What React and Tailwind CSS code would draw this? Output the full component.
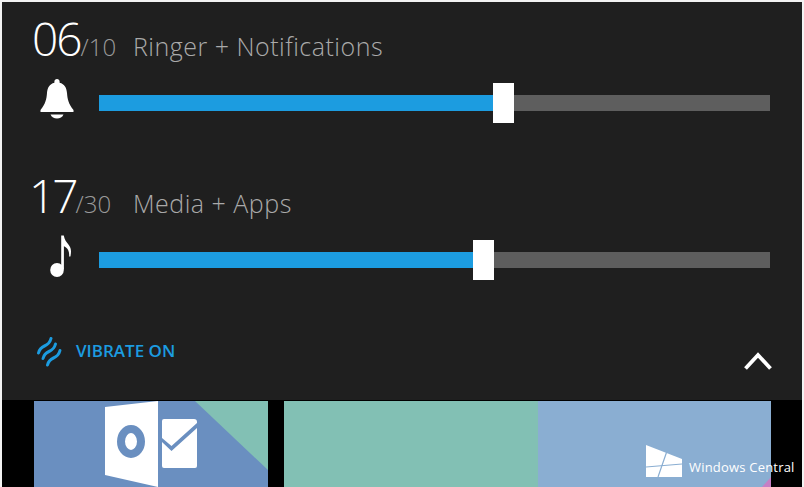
const font = { fontFamily: '"Open Sans", "Noto Sans", sans-serif' };

function Bell() {
  return (
    <svg width="34" height="40" viewBox="0 0 34 40" className="block">
      <path fill="#fff" d="M17 0c1.500 0 2.600 1 2.600 2.600v1.200C24.600 5 26.600 9 27 14c.4 5.500 1.400 11 6.500 17v2H.5v-2C5.600 25 6.600 19.500 7 14c.4-5 2.400-9 7.400-10.200V2.600C14.400 1 15.500 0 17 0z" />
      <path fill="#fff" d="M10.500 35.500h13c-1 2.600-3.600 4-6.500 4s-5.500-1.400-6.500-4z" />
    </svg>
  );
}

function Note() {
  return (
    <svg width="26" height="43" viewBox="0 0 26 42" className="block">
      <ellipse cx="10" cy="34.500" rx="6.800" ry="7" fill="#fff" />
      <path fill="#fff" d="M14.200 34V0h2.600c.6 4 2.600 6.500 5 9.500 2.200 2.800 2.800 6 1.600 11.500h-1.300c.4-3.500-.6-7-2.800-8.800-1-.8-1.800-1.200-2.400-1.400V34z" />
    </svg>
  );
}

const wave = "M1.500 16C2.500 12 4 10.500 7.500 9 11 7.500 13 5.500 14 1.500";

function Vibrate() {
  return (
    <svg width="27" height="31" viewBox="0 0 27 31" fill="none" stroke="#1c9ce0" strokeWidth="3" strokeLinecap="round" className="block mt-[4px]">
      <path d={wave} />
      <path d={wave} transform="translate(4.500 5.500)" />
      <path d={wave} transform="translate(9 12)" />
    </svg>
  );
}

function Slider({ value, max, name, pct, icon, rowClass, numClass, iconClass, mt }) {
  return (
    <div className={mt}>
      <div className={`flex items-baseline h-[62px] ${rowClass}`}>
        <span className={`text-[46px] font-light text-white leading-[62px] ${numClass}`}>{value}</span>
        <span className="text-[24px] font-light text-[#9a9a9a]">/{max}</span>
        <span className="text-[25px] font-light text-[#aaaaaa] ml-auto w-[669px] tracking-[.5px]">{name}</span>
      </div>
      <div className="flex items-center h-[40px] mt-[14px]">
        <div className={`w-[97px] shrink-0 mb-[8px] ${iconClass}`}>{icon}</div>
        <div className="flex items-center w-[671px] h-[16px]">
          <div className="h-full bg-[#1c9ce0]" style={{ width: pct }} />
          <div className="w-[21px] h-[40px] bg-white shrink-0" />
          <div className="h-full flex-1 bg-[#5e5e5e]" />
        </div>
      </div>
    </div>
  );
}

export default function App() {
  return (
    <div className="w-[804px] h-[487px] bg-[#f2f2f2] pt-[2px] pl-[2px] pr-[2px] overflow-hidden" style={font}>
      <div className="h-[398px] bg-[#1f1f1f] pt-[5px] relative">
        <Slider value="06" max="10" name="Ringer + Notifications" pct="394px" icon={<Bell />} rowClass="pl-[30px]" numClass="tracking-[-2px]" iconClass="pl-[38px]" />
        <Slider value="17" max="30" name="Media + Apps" pct="374px" icon={<Note />} rowClass="pl-[27px]" numClass="tracking-[-3px]" iconClass="pl-[45px]" mt="mt-[41px]" />
        <div className="flex items-center justify-between h-[32px] mt-[54px] pl-[35px] pr-[30px]">
          <div className="flex items-center gap-[12px]">
            <Vibrate />
            <span className="text-[17px] font-semibold text-[#1c9ce0] leading-none">VIBRATE ON</span>
          </div>
          <svg width="28" height="22" viewBox="0 0 28 22" className="block mt-[22px]">
            <path d="M1.500 18.500 14 5l12.500 13.500" fill="none" stroke="#fff" strokeWidth="3.800" />
          </svg>
        </div>
      </div>
      <div className="h-[87px] bg-black pt-[1px] pl-[32px] flex gap-[16px] relative">
        <div className="w-[234px] h-full bg-[#6a8fc0] relative overflow-hidden">
          <svg width="234" height="86" viewBox="0 0 234 86" className="absolute inset-0">
            <path fill="#82c0b4" d="M161 0h73v69z" />
            <path fill="#fff" d="M71 6 124 0v86L71 74z" />
            <path fill="#fff" d="M128 20a2 2 0 0 1 2-2h30a3 3 0 0 1 3 3v1l-25.500 23L128 37zM128 41l9.500 9L163 27v38a2 2 0 0 1-2 2h-31a2 2 0 0 1-2-2z" />
            <ellipse cx="97" cy="40.500" rx="10" ry="12.500" fill="none" stroke="#6a8fc0" strokeWidth="8" />
          </svg>
        </div>
        <div className="w-[487px] h-full flex">
          <div className="w-[254px] bg-[#82c0b4]" />
          <div className="flex-1 bg-[#8aaed2]" />
        </div>
        <div className="absolute right-[31px] bottom-0 w-[9px] h-[10px] bg-[#c77fc5] [clip-path:polygon(100%_0,100%_100%,0_100%)]" />
        <div className="absolute left-[644px] top-[45px] flex items-start gap-[7px]">
          <svg width="36" height="32" viewBox="0 0 36 32" className="block">
            <path fill="#fff" d="M0 0 36 14V32H0z" />
            <path d="M21 6 12 32M0 22 36 19" stroke="#8aaed2" strokeWidth="1.200" fill="none" />
          </svg>
          <span className="text-[13px] text-white leading-none mt-[16px] tracking-[.2px]">Windows Central</span>
        </div>
      </div>
    </div>
  );
}
